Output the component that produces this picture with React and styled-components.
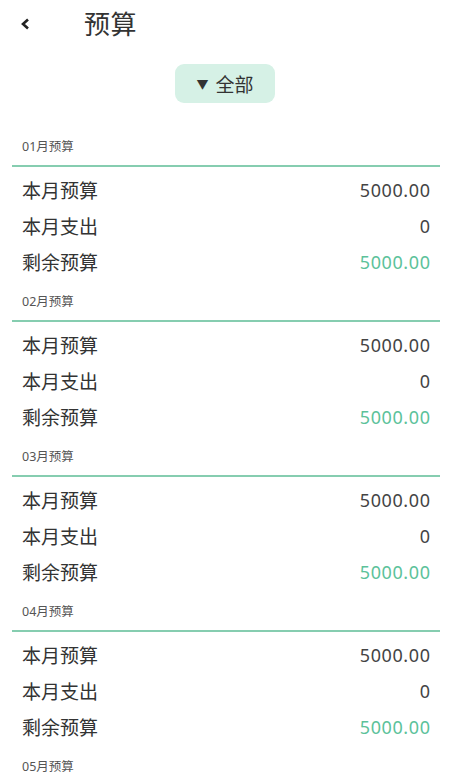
import React from "react";
import styled, { createGlobalStyle } from "styled-components";

const GlobalStyle = createGlobalStyle`
  html, body {
    margin: 0;
    padding: 0;
    background: #ffffff;
    font-family: "Noto Sans", "Noto Sans CJK SC", sans-serif;
    color: #333333;
  }
`;

const months = ["01", "02", "03", "04", "05"];

const Page = styled.div`
  width: 450px;
  height: 777px;
  overflow: hidden;
  background: #ffffff;
`;

const Header = styled.div`
  height: 42px;
  display: flex;
  align-items: center;
  padding-left: 19px;
  padding-top: 2px;
`;

const BackButton = styled.div`
  width: 12px;
  height: 14px;
  display: flex;
  align-items: center;
  justify-content: center;
  margin-top: 2px;
  margin-right: 53px;
`;

const Title = styled.h1`
  margin: 0;
  font-size: 26px;
  font-weight: 400;
  color: #333333;
  letter-spacing: 0.5px;
`;

const FilterWrap = styled.div`
  display: flex;
  justify-content: center;
  padding-top: 20px;
  padding-bottom: 22px;
`;

const FilterButton = styled.div`
  width: 100px;
  height: 39px;
  border-radius: 9px;
  background: #d6f1e6;
  display: flex;
  align-items: center;
  justify-content: center;
  gap: 7px;
  font-size: 19px;
  color: #333333;
`;

const Triangle = styled.span`
  font-size: 12px;
`;

const Section = styled.div``;

const SectionLabel = styled.div`
  padding: 14px 0 0 22px;
  height: 26px;
  font-size: 12.5px;
  line-height: 16px;
  color: #555555;
`;

const Divider = styled.div`
  height: 2px;
  margin: 0 10px 0 12px;
  background: #86cdb0;
`;

const Rows = styled.div`
  padding-top: 5px;
`;

const Row = styled.div`
  height: 36px;
  display: flex;
  align-items: center;
  justify-content: space-between;
  padding: 0 20px 0 22px;
`;

const RowLabel = styled.span`
  font-size: 19px;
  color: #333333;
`;

const RowValue = styled.span`
  font-size: 18px;
  letter-spacing: 0.6px;
  margin-right: -0.6px;
  color: ${({ $accent }) => ($accent ? "#5cc29a" : "#444444")};
`;

const BudgetSection = ({ month }) => (
  <Section>
    <SectionLabel>{month}月预算</SectionLabel>
    <Divider />
    <Rows>
      <Row>
        <RowLabel>本月预算</RowLabel>
        <RowValue>5000.00</RowValue>
      </Row>
      <Row>
        <RowLabel>本月支出</RowLabel>
        <RowValue>0</RowValue>
      </Row>
      <Row>
        <RowLabel>剩余预算</RowLabel>
        <RowValue $accent>5000.00</RowValue>
      </Row>
    </Rows>
  </Section>
);

export default function App() {
  return (
    <Page>
      <GlobalStyle />
      <Header>
        <BackButton>
          <svg width="10" height="12" viewBox="0 0 10 12">
            <path d="M8 1.5 L3 6 L8 10.5" fill="none" stroke="#222" strokeWidth="2.6" strokeLinejoin="miter" />
          </svg>
        </BackButton>
        <Title>预算</Title>
      </Header>
      <FilterWrap>
        <FilterButton>
          <Triangle>▼</Triangle>
          <span>全部</span>
        </FilterButton>
      </FilterWrap>
      {months.map((m) => (
        <BudgetSection key={m} month={m} />
      ))}
    </Page>
  );
}
